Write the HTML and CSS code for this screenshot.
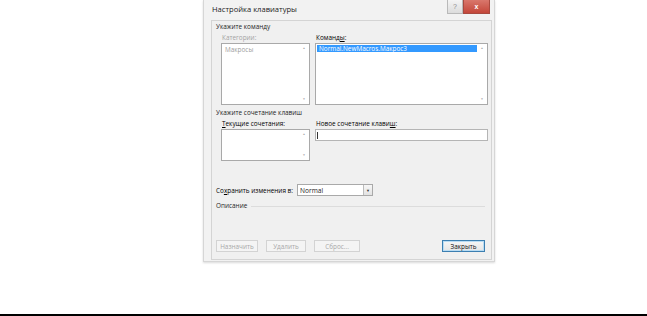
FILE: index.html
```html
<!DOCTYPE html>
<html lang="ru">
<head>
    <meta charset="UTF-8">
    <title>Настройка клавиатуры</title>
    <link rel="stylesheet" href="styles.css">
</head>
<body>
    <div class="page">
        <div class="dialog">
            <div class="titlebar">
                <span class="title">Настройка клавиатуры</span>
                <div class="caption-btns">
                    <span class="cap-help">?</span>
                    <span class="cap-close">x</span>
                </div>
            </div>

            <div class="client">
                <div class="group-label first">Укажите команду</div>
                <div class="row">
                    <div class="col-left">
                        <div class="label disabled">Категории:</div>
                        <div class="listbox tall">
                            <div class="item disabled">Макросы</div>
                            <div class="scroll"><span>▲</span><span>▼</span></div>
                        </div>
                    </div>
                    <div class="col-right">
                        <div class="label">Команд<u>ы</u>:</div>
                        <div class="listbox tall">
                            <div class="item selected">Normal.NewMacros.Макрос3</div>
                            <div class="scroll"><span>▲</span><span>▼</span></div>
                        </div>
                    </div>
                </div>

                <div class="group-label">Укажите сочетание клавиш</div>
                <div class="row">
                    <div class="col-left">
                        <div class="label"><u>Т</u>екущие сочетания:</div>
                        <div class="listbox short">
                            <div class="scroll"><span>▲</span><span>▼</span></div>
                        </div>
                    </div>
                    <div class="col-right">
                        <div class="label">Новое сочетание клави<u>ш</u>:</div>
                        <div class="textbox"><span class="caret"></span></div>
                    </div>
                </div>

                <div class="save-row">
                    <span class="save-label">Со<u>х</u>ранить изменения в:</span>
                    <div class="combo">
                        <span>Normal</span>
                        <span class="combo-btn">▼</span>
                    </div>
                </div>

                <div class="desc-row">Описание</div>

                <div class="buttons">
                    <span class="btn disabled">Назначить</span>
                    <span class="btn disabled w40">Удалить</span>
                    <span class="btn disabled w46">Сброс...</span>
                    <span class="btn default">Закрыть</span>
                </div>
            </div>
        </div>
    </div>
</body>
</html>
```

FILE: styles.css
```css
* {
    box-sizing: border-box;
}

body {
    margin: 0;
    background-color: #fff;
    font-family: "Open Sans", "Noto Sans", sans-serif;
    font-size: 6.4px;
    color: #1a1a1a;
}

u {
    text-decoration-thickness: 0.5px;
}

.page {
    height: 316px;
    border-bottom: 2px solid #000;
}

/* dialog frame */
.dialog {
    margin-left: 203px;
    width: 292px;
    height: 262px;
    background-color: #f2f2f2;
    border: 1px solid #d6d6d6;
    border-top: none;
    box-shadow: 0 1px 2px rgba(0, 0, 0, 0.15);
    display: flex;
    flex-direction: column;
}

.titlebar {
    height: 20px;
    display: flex;
    justify-content: space-between;
    align-items: flex-start;
}

.title {
    margin-left: 8px;
    margin-top: 5px;
    font-size: 7.6px;
    line-height: 9px;
    color: #222;
}

.caption-btns {
    display: flex;
    margin-right: 4px;
}

.cap-help,
.cap-close {
    height: 14px;
    display: flex;
    align-items: center;
    justify-content: center;
    font-family: "Liberation Sans", sans-serif;
    font-size: 7px;
}

.cap-help {
    width: 16px;
    background: linear-gradient(#f4f4f4, #dcdcdc);
    border: 1px solid #b9b9b9;
    border-top: none;
    color: #8a8a8a;
}

.cap-close {
    width: 27px;
    background: linear-gradient(#d9776c, #c4473a);
    border: 1px solid #a84a40;
    border-top: none;
    color: #fff;
    font-weight: bold;
}

/* client area */
.client {
    margin: 0 2px 1px 7px;
    flex: 1;
    background-color: #f0f0f0;
    border: 1px solid #d4d4d4;
    padding: 0 3px 0 4px;
    display: flex;
    flex-direction: column;
}

.group-label {
    line-height: 8px;
    height: 8px;
    margin-top: 4px;
    color: #1e1e1e;
}

.group-label.first {
    margin-top: 2px;
}

.row {
    display: flex;
    gap: 5px;
    margin-top: 3px;
    padding-left: 5px;
}

.col-left {
    width: 89px;
}

.col-right {
    width: 173px;
}

.label {
    line-height: 8px;
    height: 8px;
    padding-left: 1px;
    margin-bottom: 1px;
    color: #000;
}

.label.disabled {
    color: #a3a3a3;
}

.listbox {
    position: relative;
    background-color: #fff;
    border: 1px solid #a9a9a9;
    padding: 1px 10px 0 1px;
}

.listbox.tall {
    height: 62px;
}

.listbox.short {
    height: 32px;
    margin-top: 1px;
}

.item {
    line-height: 7px;
    height: 7px;
    padding-left: 2px;
    white-space: nowrap;
}

.item.disabled {
    color: #9d9d9d;
    margin-top: 1px;
}

.item.selected {
    background-color: #3399ff;
    color: #fff;
}

.scroll {
    position: absolute;
    top: 0;
    right: 0;
    bottom: 0;
    width: 10px;
    display: flex;
    flex-direction: column;
    justify-content: space-between;
    align-items: center;
    padding: 3px 0;
    font-size: 3px;
    color: #a9a9a9;
    line-height: 3px;
}

.textbox {
    height: 12px;
    margin-top: 1px;
    background-color: #fff;
    border: 1px solid #b5b5b5;
    padding: 2px 1px;
}

.caret {
    display: block;
    width: 1px;
    height: 7px;
    background-color: #333;
}

/* save row */
.save-row {
    display: flex;
    align-items: center;
    margin-top: 23px;
    height: 12px;
}

.save-label {
    width: 81px;
    color: #000;
}

.combo {
    width: 76px;
    height: 12px;
    background-color: #fff;
    border: 1px solid #a9a9a9;
    display: flex;
    justify-content: space-between;
    align-items: center;
    padding-left: 2px;
    font-size: 6.6px;
}

.combo-btn {
    width: 9px;
    height: 10px;
    border-left: 1px solid #bcbcbc;
    background: linear-gradient(#f7f7f7, #e2e2e2);
    font-size: 4px;
    display: flex;
    align-items: center;
    justify-content: center;
    color: #333;
}

/* description */
.desc-row {
    display: flex;
    align-items: center;
    gap: 4px;
    margin-top: 6px;
    height: 8px;
    line-height: 8px;
    padding-right: 3px;
    color: #1e1e1e;
}

.desc-row::after {
    content: "";
    flex: 1;
    height: 1px;
    background-color: #dcdcdc;
}

/* bottom buttons */
.buttons {
    display: flex;
    gap: 8px;
    margin-top: 30px;
    padding-right: 3px;
}

.btn {
    width: 42px;
    height: 12px;
    display: flex;
    align-items: center;
    justify-content: center;
    border: 1px solid #adadad;
    background: linear-gradient(#f6f6f6, #e5e5e5);
    color: #111;
}

.btn.w40 {
    width: 40px;
}

.btn.w46 {
    width: 46px;
}

.btn.disabled {
    border-color: #d3d3d3;
    background: #f4f4f4;
    color: #a8a8a8;
}

.btn.default {
    width: 43px;
    margin-left: auto;
    border-color: #3c7fb1;
    box-shadow: inset 0 0 0 1px #b9dcf3;
}
```
